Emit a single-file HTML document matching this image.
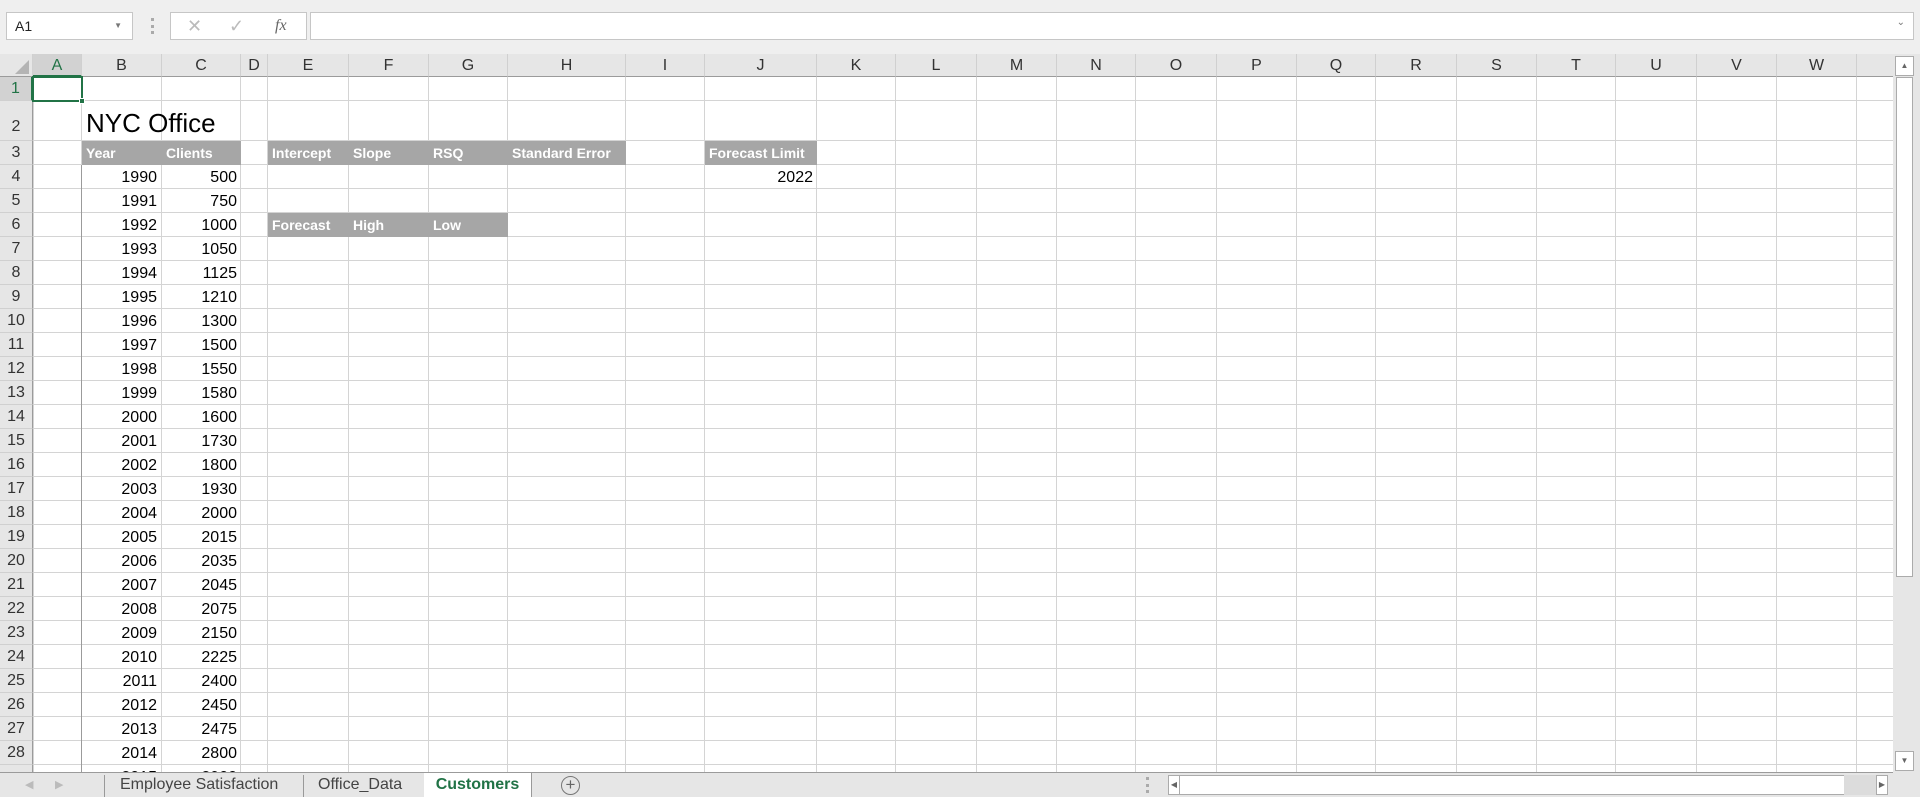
<!DOCTYPE html>
<html><head><meta charset="utf-8"><style>
*{box-sizing:border-box;margin:0;padding:0}
body{width:1920px;height:797px;overflow:hidden;background:#fff;font-family:"Liberation Sans",Arial,sans-serif;position:relative}
.a{position:absolute}
.tb{left:0;top:0;width:1920px;height:54px;background:#efefef}
.box{background:#fff;border:1px solid #c6c6c6}
.ch{top:54px;height:23px;background:#e6e6e6;color:#333;font-size:16px;text-align:center;line-height:23px;border-right:1px solid #d0d0d0;border-bottom:1px solid #9b9b9b}
.rh{left:0;width:33px;background:#e6e6e6;color:#333;font-size:16px;text-align:center;border-bottom:1px solid #d0d0d0;border-right:1px solid #9b9b9b}
.r{left:82px;width:159px;height:24px;font-size:16px;line-height:25px;color:#000}
.r span{position:absolute;right:0;width:80px;text-align:right;padding-right:4px}
.r span:first-child{right:80px}
.g{background:#a6a6a6;color:#fff;font-weight:bold;font-size:14px;line-height:24px;height:24px}
.g span{position:absolute;top:0;padding-left:4px}
</style></head><body>
<div class="a tb"></div>
<div class="a box" style="left:6px;top:12px;width:127px;height:28px;font-size:14px;line-height:26px;padding-left:8px;color:#222">A1<span style="position:absolute;right:10px;top:0;font-size:8px;color:#777">▼</span></div>
<div class="a" style="left:151px;top:18px;width:2px;height:16px;border-left:3px dotted #aaa"></div>
<div class="a box" style="left:170px;top:12px;width:137px;height:28px;color:#bbb;font-size:18px;line-height:26px">
<span style="position:absolute;left:16px">✕</span><span style="position:absolute;left:58px">✓</span><span style="position:absolute;left:104px;color:#666;font-family:'Liberation Serif',serif;font-style:italic;font-size:16px">fx</span></div>
<div class="a box" style="left:310px;top:12px;width:1604px;height:28px"><span style="position:absolute;right:8px;top:4px;font-size:10px;color:#777">⌄</span></div>

<svg class="a" style="left:0;top:54px" width="1893" height="719">
<g stroke="#d4d4d4" stroke-width="1">
<path d="M33.5 0V719M81.5 0V719M161.5 0V719M240.5 0V719M267.5 0V719M348.5 0V719M428.5 0V719M507.5 0V719M625.5 0V719M704.5 0V719M816.5 0V719M895.5 0V719M976.5 0V719M1056.5 0V719M1135.5 0V719M1216.5 0V719M1296.5 0V719M1375.5 0V719M1456.5 0V719M1536.5 0V719M1615.5 0V719M1696.5 0V719M1776.5 0V719M1856.5 0V719"/>
<path d="M0 46.5H1893M0 86.5H1893M0 110.5H1893M0 134.5H1893M0 158.5H1893M0 182.5H1893M0 206.5H1893M0 230.5H1893M0 254.5H1893M0 278.5H1893M0 302.5H1893M0 326.5H1893M0 350.5H1893M0 374.5H1893M0 398.5H1893M0 422.5H1893M0 446.5H1893M0 470.5H1893M0 494.5H1893M0 518.5H1893M0 542.5H1893M0 566.5H1893M0 590.5H1893M0 614.5H1893M0 638.5H1893M0 662.5H1893M0 686.5H1893M0 710.5H1893"/>
</g>
<path d="M81.5 111V719" stroke="#9b9b9b"/>
</svg>

<div class="a ch" style="left:0;width:33px;background:#e6e6e6"><span style="position:absolute;right:3px;bottom:2px;width:0;height:0;border-left:14px solid transparent;border-bottom:14px solid #b4b4b4"></span></div>
<div class="a ch" style="left:33px;width:49px;background:#d2d2d2;color:#217346;border-bottom:2px solid #217346">A</div>
<div class="a ch" style="left:82px;width:80px">B</div>
<div class="a ch" style="left:162px;width:79px">C</div>
<div class="a ch" style="left:241px;width:27px">D</div>
<div class="a ch" style="left:268px;width:81px">E</div>
<div class="a ch" style="left:349px;width:80px">F</div>
<div class="a ch" style="left:429px;width:79px">G</div>
<div class="a ch" style="left:508px;width:118px">H</div>
<div class="a ch" style="left:626px;width:79px">I</div>
<div class="a ch" style="left:705px;width:112px">J</div>
<div class="a ch" style="left:817px;width:79px">K</div>
<div class="a ch" style="left:896px;width:81px">L</div>
<div class="a ch" style="left:977px;width:80px">M</div>
<div class="a ch" style="left:1057px;width:79px">N</div>
<div class="a ch" style="left:1136px;width:81px">O</div>
<div class="a ch" style="left:1217px;width:80px">P</div>
<div class="a ch" style="left:1297px;width:79px">Q</div>
<div class="a ch" style="left:1376px;width:81px">R</div>
<div class="a ch" style="left:1457px;width:80px">S</div>
<div class="a ch" style="left:1537px;width:79px">T</div>
<div class="a ch" style="left:1616px;width:81px">U</div>
<div class="a ch" style="left:1697px;width:80px">V</div>
<div class="a ch" style="left:1777px;width:80px">W</div>
<div class="a ch" style="left:1857px;width:36px;border-right:none"></div>

<div class="a rh" style="top:77px;height:24px;line-height:24px;background:#d2d2d2;color:#217346;border-right:2px solid #217346">1</div>
<div class="a rh" style="top:101px;height:40px;line-height:52px">2</div>
<div class="a rh" style="top:141px;height:24px;line-height:24px">3</div>
<div class="a rh" style="top:165px;height:24px;line-height:24px">4</div>
<div class="a rh" style="top:189px;height:24px;line-height:24px">5</div>
<div class="a rh" style="top:213px;height:24px;line-height:24px">6</div>
<div class="a rh" style="top:237px;height:24px;line-height:24px">7</div>
<div class="a rh" style="top:261px;height:24px;line-height:24px">8</div>
<div class="a rh" style="top:285px;height:24px;line-height:24px">9</div>
<div class="a rh" style="top:309px;height:24px;line-height:24px">10</div>
<div class="a rh" style="top:333px;height:24px;line-height:24px">11</div>
<div class="a rh" style="top:357px;height:24px;line-height:24px">12</div>
<div class="a rh" style="top:381px;height:24px;line-height:24px">13</div>
<div class="a rh" style="top:405px;height:24px;line-height:24px">14</div>
<div class="a rh" style="top:429px;height:24px;line-height:24px">15</div>
<div class="a rh" style="top:453px;height:24px;line-height:24px">16</div>
<div class="a rh" style="top:477px;height:24px;line-height:24px">17</div>
<div class="a rh" style="top:501px;height:24px;line-height:24px">18</div>
<div class="a rh" style="top:525px;height:24px;line-height:24px">19</div>
<div class="a rh" style="top:549px;height:24px;line-height:24px">20</div>
<div class="a rh" style="top:573px;height:24px;line-height:24px">21</div>
<div class="a rh" style="top:597px;height:24px;line-height:24px">22</div>
<div class="a rh" style="top:621px;height:24px;line-height:24px">23</div>
<div class="a rh" style="top:645px;height:24px;line-height:24px">24</div>
<div class="a rh" style="top:669px;height:24px;line-height:24px">25</div>
<div class="a rh" style="top:693px;height:24px;line-height:24px">26</div>
<div class="a rh" style="top:717px;height:24px;line-height:24px">27</div>
<div class="a rh" style="top:741px;height:24px;line-height:24px">28</div>
<div class="a rh" style="top:765px;height:8px;overflow:hidden"></div>

<div class="a" style="left:32px;top:76px;width:51px;height:26px;border:2px solid #217346"></div>
<div class="a" style="left:79px;top:98px;width:6px;height:6px;background:#217346;border:1px solid #fff"></div>

<div class="a" style="left:86px;top:106px;font-size:26px;line-height:34px">NYC Office</div>

<div class="a g" style="left:82px;top:141px;width:159px"><span style="left:0">Year</span><span style="left:80px">Clients</span></div>
<div class="a g" style="left:268px;top:141px;width:358px"><span style="left:0">Intercept</span><span style="left:81px">Slope</span><span style="left:161px">RSQ</span><span style="left:240px">Standard Error</span></div>
<div class="a g" style="left:705px;top:141px;width:112px"><span style="left:0">Forecast Limit</span></div>
<div class="a g" style="left:268px;top:213px;width:240px"><span style="left:0">Forecast</span><span style="left:81px">High</span><span style="left:161px">Low</span></div>
<div class="a r" style="left:705px;top:165px;width:112px"><span style="right:0;width:112px">2022</span></div>

<div class="a r" style="top:165px"><span>1990</span><span>500</span></div>
<div class="a r" style="top:189px"><span>1991</span><span>750</span></div>
<div class="a r" style="top:213px"><span>1992</span><span>1000</span></div>
<div class="a r" style="top:237px"><span>1993</span><span>1050</span></div>
<div class="a r" style="top:261px"><span>1994</span><span>1125</span></div>
<div class="a r" style="top:285px"><span>1995</span><span>1210</span></div>
<div class="a r" style="top:309px"><span>1996</span><span>1300</span></div>
<div class="a r" style="top:333px"><span>1997</span><span>1500</span></div>
<div class="a r" style="top:357px"><span>1998</span><span>1550</span></div>
<div class="a r" style="top:381px"><span>1999</span><span>1580</span></div>
<div class="a r" style="top:405px"><span>2000</span><span>1600</span></div>
<div class="a r" style="top:429px"><span>2001</span><span>1730</span></div>
<div class="a r" style="top:453px"><span>2002</span><span>1800</span></div>
<div class="a r" style="top:477px"><span>2003</span><span>1930</span></div>
<div class="a r" style="top:501px"><span>2004</span><span>2000</span></div>
<div class="a r" style="top:525px"><span>2005</span><span>2015</span></div>
<div class="a r" style="top:549px"><span>2006</span><span>2035</span></div>
<div class="a r" style="top:573px"><span>2007</span><span>2045</span></div>
<div class="a r" style="top:597px"><span>2008</span><span>2075</span></div>
<div class="a r" style="top:621px"><span>2009</span><span>2150</span></div>
<div class="a r" style="top:645px"><span>2010</span><span>2225</span></div>
<div class="a r" style="top:669px"><span>2011</span><span>2400</span></div>
<div class="a r" style="top:693px"><span>2012</span><span>2450</span></div>
<div class="a r" style="top:717px"><span>2013</span><span>2475</span></div>
<div class="a r" style="top:741px"><span>2014</span><span>2800</span></div>
<div class="a" style="left:0;top:765px;width:241px;height:8px;overflow:hidden"><div class="a r" style="top:0"><span>2015</span><span>2900</span></div></div>

<div class="a" style="left:1893px;top:54px;width:27px;height:719px;background:#e6e6e6"></div>
<div class="a box" style="left:1895px;top:56px;width:19px;height:20px;border-color:#ababab;font-size:8px;text-align:center;line-height:18px;color:#666">▲</div>
<div class="a" style="left:1896px;top:77px;width:17px;height:500px;background:#fff;border:1px solid #ababab"></div>
<div class="a box" style="left:1895px;top:751px;width:19px;height:20px;border-color:#ababab;font-size:8px;text-align:center;line-height:18px;color:#666">▼</div>
<div class="a" style="left:0;top:772px;width:1893px;height:1px;background:#9b9b9b"></div>

<div class="a" style="left:0;top:773px;width:1920px;height:24px;background:#e6e6e6;font-size:16px;color:#444;line-height:24px">
<span class="a" style="left:25px;color:#bbb;font-size:11px">◀</span><span class="a" style="left:55px;color:#bbb;font-size:11px">▶</span>
<div class="a" style="left:104px;top:2px;width:1px;height:22px;background:#999"></div>
<span class="a" style="left:120px">Employee Satisfaction</span>
<div class="a" style="left:303px;top:2px;width:1px;height:22px;background:#999"></div>
<span class="a" style="left:318px">Office_Data</span>
<div class="a" style="left:424px;top:0;width:108px;height:24px;background:#fff;border-right:1px solid #999;color:#217346;font-weight:bold;text-align:center">Customers</div>
<span class="a" style="left:561px;top:3px;width:19px;height:19px;border:1px solid #777;border-radius:50%;text-align:center;line-height:16px;font-size:17px;color:#666">+</span>
<div class="a" style="left:1146px;top:4px;width:3px;height:16px;border-left:3px dotted #aaa"></div>
<div class="a" style="left:1168px;top:2px;width:708px;height:20px;background:#fff;border:1px solid #ababab"></div>
<div class="a" style="left:1168px;top:2px;width:12px;height:20px;border:1px solid #ababab;font-size:8px;line-height:18px;color:#666;text-align:center">◀</div>
<div class="a" style="left:1844px;top:2px;width:32px;height:20px;background:#dcdcdc"></div>
<div class="a" style="left:1876px;top:2px;width:12px;height:20px;border:1px solid #ababab;background:#fff;font-size:8px;line-height:18px;color:#666;text-align:center">▶</div>
</div>
</body></html>
